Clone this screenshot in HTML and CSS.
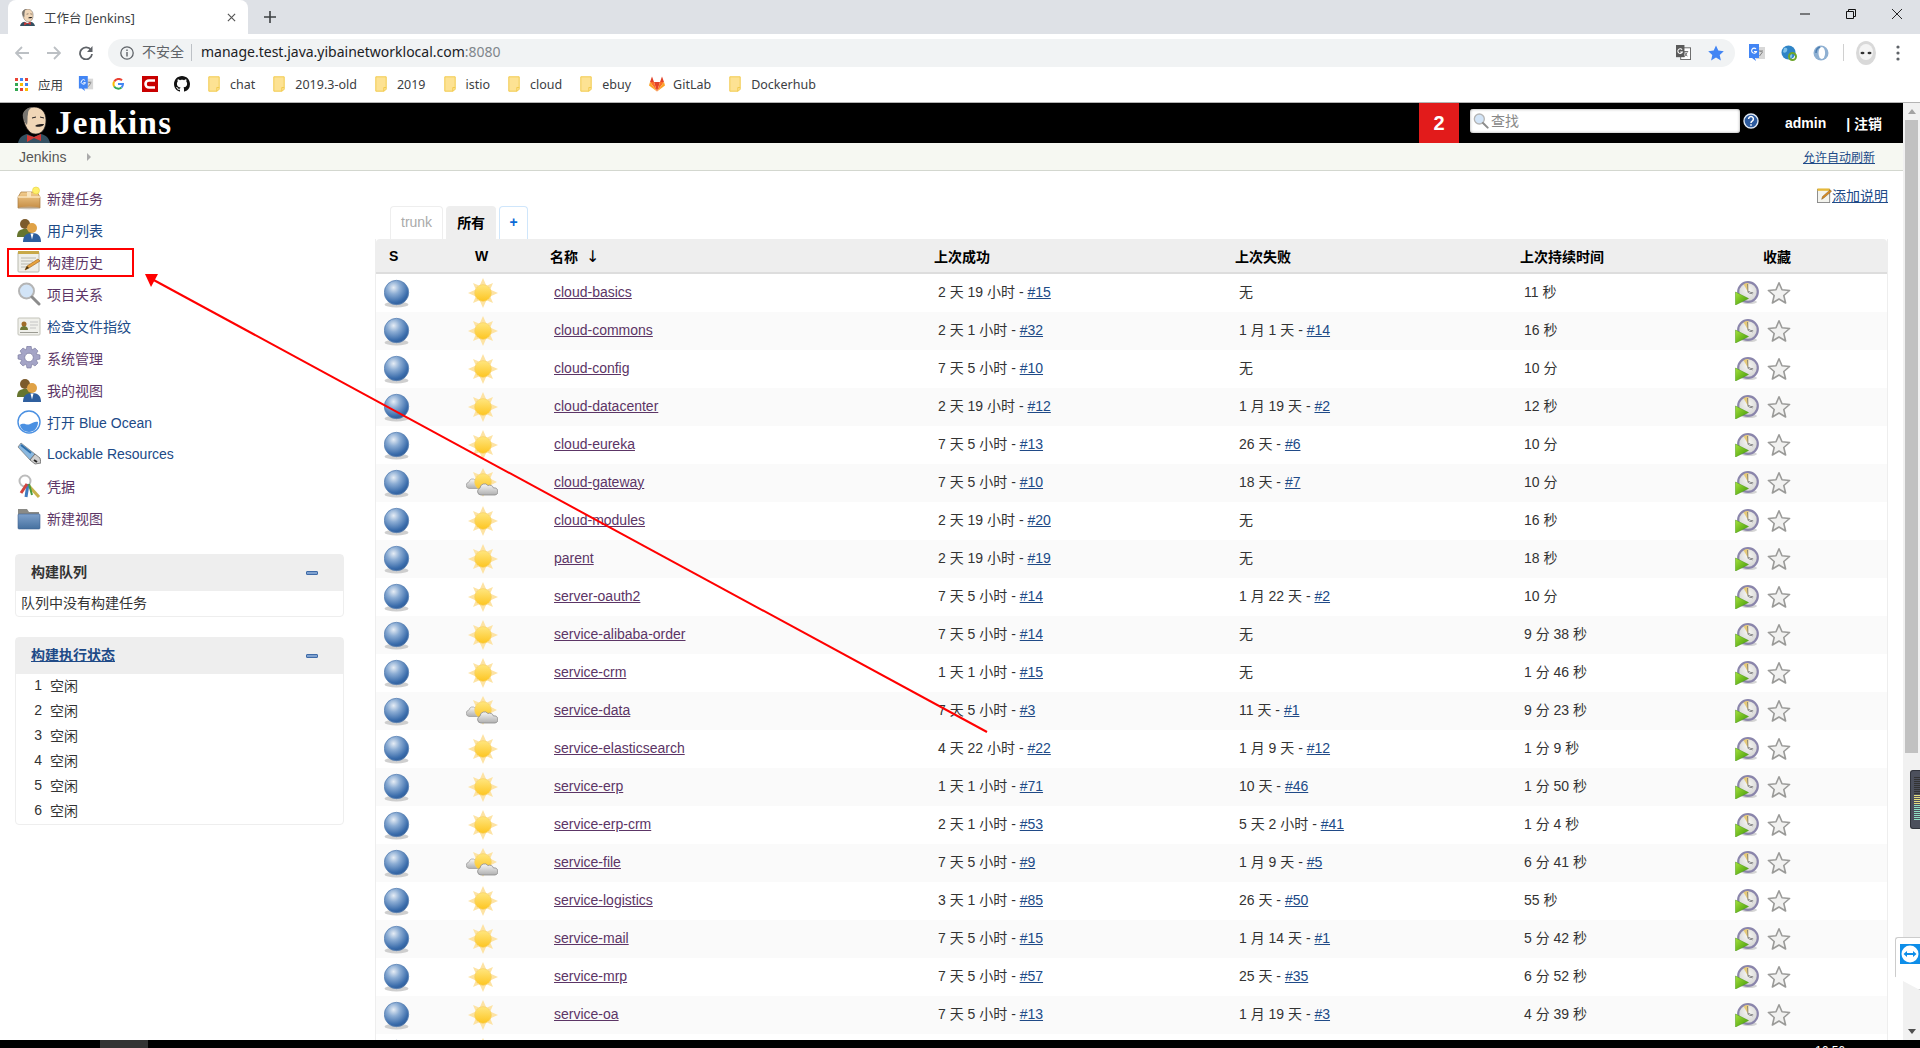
FILE: index.html
```html
<!DOCTYPE html>
<html lang="zh-CN">
<head>
    <meta charset="UTF-8">
    <title>工作台 [Jenkins]</title>
    <link rel="stylesheet" href="styles.css">
</head>
<body>
<svg class="defs" aria-hidden="true">
    <defs>
        <radialGradient id="g-ball" cx="0.38" cy="0.3" r="0.75">
            <stop offset="0" stop-color="#e6edf5"/>
            <stop offset="0.35" stop-color="#8cadd4"/>
            <stop offset="0.8" stop-color="#3a6cab"/>
            <stop offset="1" stop-color="#2d5a95"/>
        </radialGradient>
        <linearGradient id="g-sun" x1="0" y1="0" x2="0" y2="1">
            <stop offset="0" stop-color="#ffe67f"/>
            <stop offset="1" stop-color="#fdc521"/>
        </linearGradient>
        <linearGradient id="g-cloud" x1="0" y1="0" x2="0" y2="1">
            <stop offset="0" stop-color="#f7f7f7"/>
            <stop offset="1" stop-color="#b0b0b0"/>
        </linearGradient>
        <linearGradient id="g-play" x1="0" y1="0" x2="1" y2="1">
            <stop offset="0" stop-color="#a6e23c"/>
            <stop offset="1" stop-color="#3d9606"/>
        </linearGradient>
        <radialGradient id="g-clock" cx="0.5" cy="0.4" r="0.65">
            <stop offset="0" stop-color="#f7f7f5"/>
            <stop offset="1" stop-color="#cfcfcd"/>
        </radialGradient>
        <linearGradient id="g-box" x1="0" y1="0" x2="0" y2="1">
            <stop offset="0" stop-color="#f3cd8e"/>
            <stop offset="1" stop-color="#c58d45"/>
        </linearGradient>
        <linearGradient id="g-folder" x1="0" y1="0" x2="0" y2="1">
            <stop offset="0" stop-color="#7fa1cb"/>
            <stop offset="1" stop-color="#45709f"/>
        </linearGradient>

        <symbol id="i-ball" viewBox="0 0 28 30">
            <ellipse cx="12.500" cy="26.500" rx="12" ry="3" fill="#bbb" opacity=".7"/>
            <circle cx="12.500" cy="14.500" r="12.200" fill="url(#g-ball)" stroke="#5d84b5" stroke-width=".8"/>
        </symbol>
        <symbol id="i-sun" viewBox="0 0 30 30">
            <g fill="#fde3a4">
                <polygon points="15,0 11.500,8 18.500,8"/>
                <polygon points="15,30 11.500,22 18.500,22"/>
                <polygon points="0,15 8,11.500 8,18.500"/>
                <polygon points="30,15 22,11.500 22,18.500"/>
                <polygon points="5,5 11,7.500 7.500,11"/>
                <polygon points="25,5 19,7.500 22.500,11"/>
                <polygon points="5,25 11,22.500 7.500,19"/>
                <polygon points="25,25 19,22.500 22.500,19"/>
            </g>
            <circle cx="15" cy="15" r="8.300" fill="url(#g-sun)" stroke="#f6cd5b" stroke-width=".6"/>
        </symbol>
        <symbol id="i-cloudy" viewBox="0 0 32 30">
            <g fill="#fde3a4">
                <polygon points="17,0 14,6 20,6"/>
                <polygon points="7,4 13,6.500 9.500,10"/>
                <polygon points="27,4 21,6.500 24.500,10"/>
                <polygon points="31,14 25,11 25,17"/>
                <polygon points="17,29 14,23 20,23"/>
            </g>
            <path d="M3 20.500a3.300 3.300 0 0 1 0-6.500a3.500 3.500 0 0 1 6-2a3.500 3.500 0 0 1 4 4v4.500z" fill="url(#g-cloud)" stroke="#999" stroke-width=".7"/>
            <circle cx="17" cy="14" r="8.300" fill="url(#g-sun)" stroke="#f6cd5b" stroke-width=".6"/>
            <path d="M15 27a3.600 3.600 0 0 1-1-7a4.500 4.500 0 0 1 8-2.500a4 4 0 0 1 5.500 2.500a3.500 3.500 0 0 1 1.500 7z" fill="url(#g-cloud)" stroke="#8a8a8a" stroke-width=".8"/>
        </symbol>
        <symbol id="i-build" viewBox="0 0 24 24">
            <ellipse cx="14" cy="21" rx="8" ry="2" fill="#bbb" opacity=".6"/>
            <circle cx="13" cy="11" r="9.800" fill="url(#g-clock)" stroke="#8a85ab" stroke-width="2.200"/>
            <path d="M13 11L8.500 3.200A9 9 0 0 1 13.500 2z" fill="#e8cb78"/>
            <path d="M13 11l-.5-8" stroke="#777" stroke-width=".8" fill="none"/>
            <path d="M13 11l5 1.500" stroke="#222" stroke-width="1.800" fill="none"/>
            <path d="M13 11l5 1.500" stroke="#fff" stroke-width=".8" fill="none"/>
            <polygon points="0.500,11 13.500,17.500 0.500,24" fill="url(#g-play)" stroke="#4d9a14" stroke-width=".5"/>
        </symbol>
        <symbol id="i-star" viewBox="0 0 24 24">
            <polygon points="12,1.800 15,8.800 22.600,9.500 16.800,14.500 18.600,22 12,18 5.400,22 7.200,14.500 1.400,9.500 9,8.800" fill="#f1f1f0" stroke="#9b9b99" stroke-width="1.600" stroke-linejoin="round"/>
        </symbol>
        <symbol id="i-head" viewBox="0 0 32 36">
            <path d="M0 36c1-5 4-8 9-9l7 3l7-3c5 1 8 4 9 9z" fill="#335061"/>
            <path d="M5 10C4 4 10 0 16 0c7 0 12 5 12 13c0 6-2 11-6 13c-4 2-9 1-11-2C8 21 6 16 5 10z" fill="#f0d6b7" stroke="#231f20" stroke-width=".7"/>
            <path d="M5 10C4 4 10 0 16 0c-4 1-6 3-6 7c-1 3 0 7-1 11C7 16 6 14 5 10z" fill="#77746f"/>
            <path d="M14 11l4-1M22 10l4 1" stroke="#231f20" stroke-width="1" fill="none"/>
            <path d="M17 19c2-2 6-2 9-2c0 2-5 4-9 2z" fill="#231f20"/>
            <polygon points="9,28 16,30 23,27 23,34 16,31 9,35" fill="#d33833"/>
        </symbol>
        <symbol id="i-translate" viewBox="0 0 16 18">
            <rect x="7" y="3" width="9" height="12" fill="#d8d8d8"/>
            <path d="M10 7h4M12 7v1M10.500 12l3-4" stroke="#777" stroke-width=".9" fill="none"/>
            <path d="M0 0h10v14H6l1 3l-4-3H0z" fill="#4285f4"/>
            <path d="M7 5a2.500 2.500 0 1 0 .5 2.500H5" stroke="#fff" stroke-width="1.100" fill="none"/>
        </symbol>
        <symbol id="i-translate-dark" viewBox="0 0 16 16">
            <rect x="5" y="3" width="10.500" height="12.500" fill="#fff" stroke="#666"/>
            <path d="M8 7h5M10.500 7v1M9 12.500l3-4.500M9 8l3 4" stroke="#666" fill="none"/>
            <rect width="9" height="13" fill="#5a5a5a"/>
            <path d="M6.500 5a2.500 2.500 0 1 0 .3 2.500H4.500" stroke="#fff" stroke-width="1.100" fill="none"/>
        </symbol>
        <symbol id="i-folder-mark" viewBox="0 0 12 16">
            <path d="M.8.8h10.400v12.400l-2 2H.8z" fill="#fde293" stroke="#f2cb4f" stroke-width="1"/>
            <path d="M11.200 11.500H8.800v3.500" fill="none" stroke="#f2cb4f"/>
        </symbol>

        <symbol id="i-users" viewBox="0 0 24 24">
            <circle cx="8" cy="6" r="5" fill="#7c5a2c"/>
            <path d="M0 19c0-6 3-8 8-8s8 2 8 8z" fill="#66752f"/>
            <circle cx="15" cy="10" r="5" fill="#e0a246"/>
            <path d="M6 24c0-6 3-9 9-9s9 3 9 9z" fill="#2f5f9e"/>
            <path d="M13.500 15.500h3l-1.500 6z" fill="#fff"/>
        </symbol>
        <symbol id="i-package" viewBox="0 0 24 24">
            <path d="M1 11l3-5h16l3 5v11H1z" fill="url(#g-box)" stroke="#a87a3c" stroke-width=".7"/>
            <path d="M1 11h22" stroke="#fbe5bd" stroke-width="1.500"/>
            <path d="M10 6h4v5h-4z" fill="#f9e5bf"/>
            <ellipse cx="12" cy="22" rx="11" ry="1.500" fill="#bbb" opacity=".5"/>
            <circle cx="19" cy="4.500" r="3.500" fill="#fff06a" stroke="#e5d13a" stroke-width=".6"/>
        </symbol>
        <symbol id="i-notepad" viewBox="0 0 24 24">
            <rect x="1" y="2" width="21" height="20" rx="1" fill="#efefe9" stroke="#b9b9ae"/>
            <rect x="1" y="1" width="21" height="3" fill="#c8a948"/>
            <path d="M4 8h15M4 11h12M4 14h9M4 17h7" stroke="#b9b9b0"/>
            <path d="M8 20l2-4l11-7l2 2l-11 7z" fill="#e8a33d" stroke="#9b5e17" stroke-width=".6"/>
            <path d="M8 20l2-4l2 2z" fill="#4a3410"/>
        </symbol>
        <symbol id="i-search" viewBox="0 0 24 24">
            <circle cx="9.500" cy="9" r="7.500" fill="#d2e4f7" stroke="#b5b5b5" stroke-width="2"/>
            <path d="M15 15l7 7" stroke="#8c8c8c" stroke-width="3" stroke-linecap="round"/>
        </symbol>
        <symbol id="i-card" viewBox="0 0 24 24">
            <rect x="1" y="4" width="22" height="17" rx="1" fill="#f0f0eb" stroke="#c3c3ba"/>
            <circle cx="7" cy="10" r="2.500" fill="#a06c28"/>
            <path d="M3 16c0-3 2-4 4-4s4 1 4 4z" fill="#6f7833"/>
            <path d="M13 8h8M13 11h8M13 14h6" stroke="#c4c4c4"/>
            <path d="M3 18.500h18" stroke="#9b9b93"/>
        </symbol>
        <symbol id="i-gear" viewBox="0 0 24 24">
            <path d="M10 0h4l1 4l3-2l3 3l-2 3l4 1v4l-4 1l2 3l-3 3l-3-2l-1 4h-4l-1-4l-3 2l-3-3l2-3l-4-1v-4l4-1l-2-3l3-3l3 2z" fill="#a4a4c6" stroke="#75759b" stroke-width=".6"/>
            <circle cx="12" cy="11.500" r="4.300" fill="#fff" stroke="#75759b" stroke-width=".7"/>
        </symbol>
        <symbol id="i-ocean" viewBox="0 0 24 24">
            <circle cx="12" cy="12" r="11" fill="#fff" stroke="#4a90e2" stroke-width="1.400"/>
            <path d="M3 15c4-3 7 1 10-1c3-1 5-3 8-2c0 6-4 10-9 10S4 19 3 15z" fill="#4a90e2"/>
        </symbol>
        <symbol id="i-usb" viewBox="0 0 24 24">
            <path d="M1 5l3-4l14 11l-5 6z" fill="#89b8e0" stroke="#777" stroke-width=".7"/>
            <path d="M4 3l10 8" stroke="#2d6da8" stroke-width="2"/>
            <path d="M13 18l5-6l5 4l1 5l-6 1z" fill="#cfcfcf" stroke="#555" stroke-width=".7"/>
            <path d="M17 18l3 2" stroke="#222" stroke-width="2"/>
        </symbol>
        <symbol id="i-keys" viewBox="0 0 24 24">
            <circle cx="8" cy="7" r="5.500" fill="none" stroke="#bcbcbc" stroke-width="2"/>
            <path d="M12 12l10 11" stroke="#c9b14a" stroke-width="3"/>
            <path d="M11 10L9 23" stroke="#3f7bc0" stroke-width="3"/>
            <path d="M10 10L4 19" stroke="#d0443d" stroke-width="3"/>
            <path d="M12 10l3 11" stroke="#4a9a3d" stroke-width="2"/>
        </symbol>
        <symbol id="i-folder" viewBox="0 0 24 24">
            <path d="M1 3h9l2 3h10v16H1z" fill="#8a8a86"/>
            <rect x="1" y="8" width="22" height="15" rx="1" fill="url(#g-folder)" stroke="#3f6390" stroke-width=".6"/>
        </symbol>
        <symbol id="i-note" viewBox="0 0 16 16">
            <rect x=".5" y="1.500" width="13" height="14" fill="#f4f4ee" stroke="#888"/>
            <rect x=".5" y=".5" width="13" height="2.500" fill="#e7b93a"/>
            <path d="M5 12l1-3l8-7l1.500 1.500l-8 7z" fill="#d98b22" stroke="#744a10" stroke-width=".5"/>
        </symbol>
    </defs>
</svg>

<div class="window">
    <!-- browser chrome -->
    <div class="tabstrip">
        <div class="tab">
            <svg class="tab-icon"><use href="#i-head"/></svg>
            <span class="tab-title">工作台 [Jenkins]</span>
            <svg class="tab-close" viewBox="0 0 10 10"><path d="M1 1l8 8M9 1l-8 8" stroke="#555" stroke-width="1.300"/></svg>
        </div>
        <svg class="tab-new" viewBox="0 0 12 12"><path d="M6 0v12M0 6h12" stroke="#3c4043" stroke-width="1.600"/></svg>
        <div class="win-controls">
            <div class="win-btn"><svg viewBox="0 0 10 10"><path d="M0 5h10" stroke="#111"/></svg></div>
            <div class="win-btn"><svg viewBox="0 0 10 10"><path d="M.5 2.500h7v7h-7zM2.500 2.500v-2h7v7h-2" fill="none" stroke="#111"/></svg></div>
            <div class="win-btn"><svg viewBox="0 0 10 10"><path d="M0 0l10 10M10 0L0 10" stroke="#111" stroke-width=".9"/></svg></div>
        </div>
    </div>

    <div class="toolbar">
        <svg class="nav-btn" viewBox="0 0 14 14"><path d="M14 7H2M7 1L1 7l6 6" fill="none" stroke="#bcc0c4" stroke-width="1.800"/></svg>
        <svg class="nav-btn" viewBox="0 0 14 14"><path d="M0 7h12M7 1l6 6l-6 6" fill="none" stroke="#bcc0c4" stroke-width="1.800"/></svg>
        <svg class="nav-btn" viewBox="0 0 14 14"><path d="M12 4A6 6 0 1 0 13 8" fill="none" stroke="#5f6368" stroke-width="1.800"/><polygon points="13.500,0 13.500,6 8,6" fill="#5f6368"/></svg>
        <div class="omnibox">
            <svg class="omni-info" viewBox="0 0 14 14"><circle cx="7" cy="7" r="6.200" fill="none" stroke="#5f6368" stroke-width="1.300"/><path d="M7 6v4.500M7 3.500v1.400" stroke="#5f6368" stroke-width="1.400"/></svg>
            <span class="omni-warn">不安全</span>
            <span class="omni-sep"></span>
            <span class="omni-url">manage.test.java.yibainetworklocal.com<span class="omni-port">:8080</span></span>
            <svg class="omni-translate"><use href="#i-translate-dark"/></svg>
            <svg class="omni-star" viewBox="0 0 16 16"><polygon points="8,.5 10.300,5.600 15.800,6.200 11.700,9.900 12.900,15.400 8,12.600 3.100,15.400 4.300,9.900 .2,6.200 5.700,5.600" fill="#4285f4"/></svg>
        </div>
        <svg class="ext-icon ext-first"><use href="#i-translate"/></svg>
        <svg class="ext-icon" viewBox="0 0 16 16"><circle cx="7.500" cy="7.500" r="7" fill="#2f84c6"/><path d="M3 3c3-1 4 1 3 3s-3 2-4 1zM8 9c3-1 4 1 3 3s-3 2-4 1z" fill="#7fc1ea"/><circle cx="11.500" cy="11.500" r="3.500" fill="none" stroke="#6da52b" stroke-width="2"/></svg>
        <svg class="ext-icon" viewBox="0 0 16 16"><circle cx="8" cy="8" r="7.500" fill="#8fb0d2"/><ellipse cx="8.800" cy="8" rx="3.300" ry="6" fill="#fff"/><path d="M3 8a6 6 0 0 1 4-6" stroke="#4d7fb2" stroke-width="1.500" fill="none"/></svg>
        <span class="ext-sep"></span>
        <svg class="avatar" viewBox="0 0 20 24"><ellipse cx="10" cy="12" rx="10" ry="12" fill="#d9d9d9"/><ellipse cx="10" cy="11" rx="7" ry="8" fill="#f4f4f4"/><ellipse cx="6.500" cy="12" rx="2" ry="1.200" fill="#333"/><ellipse cx="13.500" cy="12" rx="2" ry="1.200" fill="#333"/></svg>
        <svg class="menu-dots" viewBox="0 0 4 16"><circle cx="2" cy="2" r="1.600" fill="#5f6368"/><circle cx="2" cy="8" r="1.600" fill="#5f6368"/><circle cx="2" cy="14" r="1.600" fill="#5f6368"/></svg>
    </div>

    <div class="bookmarks">
        <div class="bm bm-apps">
            <svg class="bm-grid" viewBox="0 0 13 13">
                <rect width="3" height="3" fill="#ea4335"/><rect x="5" width="3" height="3" fill="#4285f4"/><rect x="10" width="3" height="3" fill="#ea4335"/>
                <rect y="5" width="3" height="3" fill="#34a853"/><rect x="5" y="5" width="3" height="3" fill="#fbbc05"/><rect x="10" y="5" width="3" height="3" fill="#4285f4"/>
                <rect y="10" width="3" height="3" fill="#34a853"/><rect x="5" y="10" width="3" height="3" fill="#ea4335"/><rect x="10" y="10" width="3" height="3" fill="#fbbc05"/>
            </svg>
            <span>应用</span>
        </div>
        <div class="bm"><svg class="bm-icon"><use href="#i-translate"/></svg></div>
        <div class="bm">
            <svg class="bm-google" viewBox="0 0 12 12">
                <path d="M10 2.300A5 5 0 0 0 2.200 3.500" fill="none" stroke="#ea4335" stroke-width="2"/>
                <path d="M2.200 3.500a5 5 0 0 0 0 5" fill="none" stroke="#fbbc05" stroke-width="2"/>
                <path d="M2.200 8.500A5 5 0 0 0 9.500 9.500" fill="none" stroke="#34a853" stroke-width="2"/>
                <path d="M9.500 9.500A5 5 0 0 0 11 6H6" fill="none" stroke="#4285f4" stroke-width="2"/>
            </svg>
        </div>
        <div class="bm bm-tight">
            <svg class="bm-icon" viewBox="0 0 16 16"><rect width="16" height="16" fill="#c80000"/><path d="M13 4.500H7a3.500 3.500 0 0 0 0 7h6" fill="none" stroke="#fff" stroke-width="2.600"/></svg>
        </div>
        <div class="bm">
            <svg class="bm-icon" viewBox="0 0 16 16"><path d="M8 0C3.580 0 0 3.580 0 8c0 3.540 2.290 6.530 5.470 7.590.4.070.55-.17.55-.38 0-.19-.01-.82-.01-1.490-2.010.37-2.530-.49-2.690-.94-.09-.23-.48-.94-.82-1.130-.28-.15-.68-.52-.01-.53.63-.01 1.080.58 1.230.82.72 1.210 1.870.87 2.330.66.07-.52.28-.87.51-1.070-1.780-.2-3.640-.89-3.640-3.950 0-.87.31-1.590.82-2.150-.08-.2-.36-1.020.08-2.120 0 0 .67-.21 2.200.82.64-.18 1.320-.27 2-.27.68 0 1.360.09 2 .27 1.530-1.040 2.200-.82 2.200-.82.44 1.100.16 1.920.08 2.120.51.56.82 1.270.82 2.150 0 3.070-1.870 3.750-3.650 3.950.29.25.54.73.54 1.480 0 1.070-.01 1.930-.01 2.200 0 .21.15.46.55.38A8.013 8.013 0 0016 8c0-4.420-3.580-8-8-8z" fill="#111"/></svg>
        </div>
        <div class="bm"><svg class="bm-folder"><use href="#i-folder-mark"/></svg><span>chat</span></div>
        <div class="bm"><svg class="bm-folder"><use href="#i-folder-mark"/></svg><span>2019.3-old</span></div>
        <div class="bm"><svg class="bm-folder"><use href="#i-folder-mark"/></svg><span>2019</span></div>
        <div class="bm"><svg class="bm-folder"><use href="#i-folder-mark"/></svg><span>istio</span></div>
        <div class="bm"><svg class="bm-folder"><use href="#i-folder-mark"/></svg><span>cloud</span></div>
        <div class="bm"><svg class="bm-folder"><use href="#i-folder-mark"/></svg><span>ebuy</span></div>
        <div class="bm bm-lab">
            <svg class="bm-icon" viewBox="0 0 16 16">
                <polygon points="8,15.500 11,6 5,6" fill="#e24329"/>
                <polygon points="8,15.500 5,6 1,6" fill="#fc6d26"/>
                <polygon points="8,15.500 11,6 15,6" fill="#fc6d26"/>
                <polygon points="1,6 0,9.500 8,15.500" fill="#fca326"/>
                <polygon points="15,6 16,9.500 8,15.500" fill="#fca326"/>
                <polygon points="1,6 5,6 3,.5" fill="#e24329"/>
                <polygon points="15,6 11,6 13,.5" fill="#e24329"/>
            </svg>
            <span>GitLab</span>
        </div>
        <div class="bm"><svg class="bm-folder"><use href="#i-folder-mark"/></svg><span>Dockerhub</span></div>
    </div>

    <div class="viewport">
        <div class="page">
            <div class="header">
                <div class="logo">
                    <svg class="logo-head"><use href="#i-head"/></svg>
                    <span class="logo-text">Jenkins</span>
                </div>
                <div class="build-count">2</div>
                <div class="search">
                    <svg class="search-icon"><use href="#i-search"/></svg>
                    <span>查找</span>
                </div>
                <svg class="help" viewBox="0 0 16 16"><circle cx="8" cy="8" r="7" fill="#2c5a9e" stroke="#dfe8f3" stroke-width="1.400"/><path d="M5.600 6a2.400 2.400 0 1 1 3.600 2.100c-.8.500-1.200.9-1.200 1.900M8 11.200v1.600" fill="none" stroke="#fff" stroke-width="1.500"/></svg>
                <span class="user">admin</span>
                <span class="logout">| 注销</span>
            </div>
            <div class="breadcrumb">
                <span class="crumb">Jenkins</span>
                <span class="crumb-arrow"></span>
                <a class="auto-refresh" href="#">允许自动刷新</a>
            </div>
            <div class="main">
                <div class="side">
                    <div class="tasks">
                        <a class="task visited" href="#"><svg><use href="#i-package"/></svg>新建任务</a>
                        <a class="task" href="#"><svg><use href="#i-users"/></svg>用户列表</a>
                        <a class="task visited" href="#"><svg><use href="#i-notepad"/></svg>构建历史</a>
                        <a class="task visited" href="#"><svg><use href="#i-search"/></svg>项目关系</a>
                        <a class="task" href="#"><svg><use href="#i-card"/></svg>检查文件指纹</a>
                        <a class="task visited" href="#"><svg><use href="#i-gear"/></svg>系统管理</a>
                        <a class="task visited" href="#"><svg><use href="#i-users"/></svg>我的视图</a>
                        <a class="task" href="#"><svg><use href="#i-ocean"/></svg>打开 Blue Ocean</a>
                        <a class="task" href="#"><svg><use href="#i-usb"/></svg>Lockable Resources</a>
                        <a class="task visited" href="#"><svg><use href="#i-keys"/></svg>凭据</a>
                        <a class="task visited" href="#"><svg><use href="#i-folder"/></svg>新建视图</a>
                    </div>
                    <div class="pane">
                        <div class="pane-head"><span>构建队列</span><span class="collapse"></span></div>
                        <div class="pane-text">队列中没有构建任务</div>
                    </div>
                    <div class="pane">
                        <div class="pane-head"><a href="#">构建执行状态</a><span class="collapse"></span></div>
                        <div class="exec"><span>1</span>空闲</div>
                        <div class="exec"><span>2</span>空闲</div>
                        <div class="exec"><span>3</span>空闲</div>
                        <div class="exec"><span>4</span>空闲</div>
                        <div class="exec"><span>5</span>空闲</div>
                        <div class="exec"><span>6</span>空闲</div>
                    </div>
                </div>
                <div class="content">
                    <div class="add-desc"><svg><use href="#i-note"/></svg><a href="#">添加说明</a></div>
                    <div class="tabs">
                        <div class="view-tab">trunk</div>
                        <div class="view-tab active">所有</div>
                        <div class="view-tab add">+</div>
                    </div>
                    <table class="jobs">
                        <colgroup>
                            <col class="c-s"><col class="c-w"><col class="c-name"><col class="c-ok"><col class="c-fail"><col class="c-dur"><col class="c-fav">
                        </colgroup>
                        <thead>
                            <tr>
                                <th class="th-s">S</th>
                                <th class="th-w">W</th>
                                <th>名称 <span class="sort">↓</span></th>
                                <th>上次成功</th>
                                <th>上次失败</th>
                                <th>上次持续时间</th>
                                <th class="th-fav">收藏</th>
                            </tr>
                        </thead>
                        <tbody>
                            <tr><td><svg class="ball"><use href="#i-ball"/></svg></td><td><svg class="sun"><use href="#i-sun"/></svg></td><td><a class="job" href="#">cloud-basics</a></td><td>2 天 19 小时 - <a href="#">#15</a></td><td>无</td><td>11 秒</td><td><div class="acts"><svg><use href="#i-build"/></svg><svg><use href="#i-star"/></svg></div></td></tr>
                            <tr><td><svg class="ball"><use href="#i-ball"/></svg></td><td><svg class="sun"><use href="#i-sun"/></svg></td><td><a class="job" href="#">cloud-commons</a></td><td>2 天 1 小时 - <a href="#">#32</a></td><td>1 月 1 天 - <a href="#">#14</a></td><td>16 秒</td><td><div class="acts"><svg><use href="#i-build"/></svg><svg><use href="#i-star"/></svg></div></td></tr>
                            <tr><td><svg class="ball"><use href="#i-ball"/></svg></td><td><svg class="sun"><use href="#i-sun"/></svg></td><td><a class="job" href="#">cloud-config</a></td><td>7 天 5 小时 - <a href="#">#10</a></td><td>无</td><td>10 分</td><td><div class="acts"><svg><use href="#i-build"/></svg><svg><use href="#i-star"/></svg></div></td></tr>
                            <tr><td><svg class="ball"><use href="#i-ball"/></svg></td><td><svg class="sun"><use href="#i-sun"/></svg></td><td><a class="job" href="#">cloud-datacenter</a></td><td>2 天 19 小时 - <a href="#">#12</a></td><td>1 月 19 天 - <a href="#">#2</a></td><td>12 秒</td><td><div class="acts"><svg><use href="#i-build"/></svg><svg><use href="#i-star"/></svg></div></td></tr>
                            <tr><td><svg class="ball"><use href="#i-ball"/></svg></td><td><svg class="sun"><use href="#i-sun"/></svg></td><td><a class="job" href="#">cloud-eureka</a></td><td>7 天 5 小时 - <a href="#">#13</a></td><td>26 天 - <a href="#">#6</a></td><td>10 分</td><td><div class="acts"><svg><use href="#i-build"/></svg><svg><use href="#i-star"/></svg></div></td></tr>
                            <tr><td><svg class="ball"><use href="#i-ball"/></svg></td><td><svg class="cloudy"><use href="#i-cloudy"/></svg></td><td><a class="job" href="#">cloud-gateway</a></td><td>7 天 5 小时 - <a href="#">#10</a></td><td>18 天 - <a href="#">#7</a></td><td>10 分</td><td><div class="acts"><svg><use href="#i-build"/></svg><svg><use href="#i-star"/></svg></div></td></tr>
                            <tr><td><svg class="ball"><use href="#i-ball"/></svg></td><td><svg class="sun"><use href="#i-sun"/></svg></td><td><a class="job" href="#">cloud-modules</a></td><td>2 天 19 小时 - <a href="#">#20</a></td><td>无</td><td>16 秒</td><td><div class="acts"><svg><use href="#i-build"/></svg><svg><use href="#i-star"/></svg></div></td></tr>
                            <tr><td><svg class="ball"><use href="#i-ball"/></svg></td><td><svg class="sun"><use href="#i-sun"/></svg></td><td><a class="job" href="#">parent</a></td><td>2 天 19 小时 - <a href="#">#19</a></td><td>无</td><td>18 秒</td><td><div class="acts"><svg><use href="#i-build"/></svg><svg><use href="#i-star"/></svg></div></td></tr>
                            <tr><td><svg class="ball"><use href="#i-ball"/></svg></td><td><svg class="sun"><use href="#i-sun"/></svg></td><td><a class="job" href="#">server-oauth2</a></td><td>7 天 5 小时 - <a href="#">#14</a></td><td>1 月 22 天 - <a href="#">#2</a></td><td>10 分</td><td><div class="acts"><svg><use href="#i-build"/></svg><svg><use href="#i-star"/></svg></div></td></tr>
                            <tr><td><svg class="ball"><use href="#i-ball"/></svg></td><td><svg class="sun"><use href="#i-sun"/></svg></td><td><a class="job" href="#">service-alibaba-order</a></td><td>7 天 5 小时 - <a href="#">#14</a></td><td>无</td><td>9 分 38 秒</td><td><div class="acts"><svg><use href="#i-build"/></svg><svg><use href="#i-star"/></svg></div></td></tr>
                            <tr><td><svg class="ball"><use href="#i-ball"/></svg></td><td><svg class="sun"><use href="#i-sun"/></svg></td><td><a class="job" href="#">service-crm</a></td><td>1 天 1 小时 - <a href="#">#15</a></td><td>无</td><td>1 分 46 秒</td><td><div class="acts"><svg><use href="#i-build"/></svg><svg><use href="#i-star"/></svg></div></td></tr>
                            <tr><td><svg class="ball"><use href="#i-ball"/></svg></td><td><svg class="cloudy"><use href="#i-cloudy"/></svg></td><td><a class="job" href="#">service-data</a></td><td>7 天 5 小时 - <a href="#">#3</a></td><td>11 天 - <a href="#">#1</a></td><td>9 分 23 秒</td><td><div class="acts"><svg><use href="#i-build"/></svg><svg><use href="#i-star"/></svg></div></td></tr>
                            <tr><td><svg class="ball"><use href="#i-ball"/></svg></td><td><svg class="sun"><use href="#i-sun"/></svg></td><td><a class="job" href="#">service-elasticsearch</a></td><td>4 天 22 小时 - <a href="#">#22</a></td><td>1 月 9 天 - <a href="#">#12</a></td><td>1 分 9 秒</td><td><div class="acts"><svg><use href="#i-build"/></svg><svg><use href="#i-star"/></svg></div></td></tr>
                            <tr><td><svg class="ball"><use href="#i-ball"/></svg></td><td><svg class="sun"><use href="#i-sun"/></svg></td><td><a class="job" href="#">service-erp</a></td><td>1 天 1 小时 - <a href="#">#71</a></td><td>10 天 - <a href="#">#46</a></td><td>1 分 50 秒</td><td><div class="acts"><svg><use href="#i-build"/></svg><svg><use href="#i-star"/></svg></div></td></tr>
                            <tr><td><svg class="ball"><use href="#i-ball"/></svg></td><td><svg class="sun"><use href="#i-sun"/></svg></td><td><a class="job" href="#">service-erp-crm</a></td><td>2 天 1 小时 - <a href="#">#53</a></td><td>5 天 2 小时 - <a href="#">#41</a></td><td>1 分 4 秒</td><td><div class="acts"><svg><use href="#i-build"/></svg><svg><use href="#i-star"/></svg></div></td></tr>
                            <tr><td><svg class="ball"><use href="#i-ball"/></svg></td><td><svg class="cloudy"><use href="#i-cloudy"/></svg></td><td><a class="job" href="#">service-file</a></td><td>7 天 5 小时 - <a href="#">#9</a></td><td>1 月 9 天 - <a href="#">#5</a></td><td>6 分 41 秒</td><td><div class="acts"><svg><use href="#i-build"/></svg><svg><use href="#i-star"/></svg></div></td></tr>
                            <tr><td><svg class="ball"><use href="#i-ball"/></svg></td><td><svg class="sun"><use href="#i-sun"/></svg></td><td><a class="job" href="#">service-logistics</a></td><td>3 天 1 小时 - <a href="#">#85</a></td><td>26 天 - <a href="#">#50</a></td><td>55 秒</td><td><div class="acts"><svg><use href="#i-build"/></svg><svg><use href="#i-star"/></svg></div></td></tr>
                            <tr><td><svg class="ball"><use href="#i-ball"/></svg></td><td><svg class="sun"><use href="#i-sun"/></svg></td><td><a class="job" href="#">service-mail</a></td><td>7 天 5 小时 - <a href="#">#15</a></td><td>1 月 14 天 - <a href="#">#1</a></td><td>5 分 42 秒</td><td><div class="acts"><svg><use href="#i-build"/></svg><svg><use href="#i-star"/></svg></div></td></tr>
                            <tr><td><svg class="ball"><use href="#i-ball"/></svg></td><td><svg class="sun"><use href="#i-sun"/></svg></td><td><a class="job" href="#">service-mrp</a></td><td>7 天 5 小时 - <a href="#">#57</a></td><td>25 天 - <a href="#">#35</a></td><td>6 分 52 秒</td><td><div class="acts"><svg><use href="#i-build"/></svg><svg><use href="#i-star"/></svg></div></td></tr>
                            <tr><td><svg class="ball"><use href="#i-ball"/></svg></td><td><svg class="sun"><use href="#i-sun"/></svg></td><td><a class="job" href="#">service-oa</a></td><td>7 天 5 小时 - <a href="#">#13</a></td><td>1 月 19 天 - <a href="#">#3</a></td><td>4 分 39 秒</td><td><div class="acts"><svg><use href="#i-build"/></svg><svg><use href="#i-star"/></svg></div></td></tr>
                            <tr><td><svg class="ball"><use href="#i-ball"/></svg></td><td><svg class="sun"><use href="#i-sun"/></svg></td><td></td><td></td><td></td><td></td><td></td></tr>
                        </tbody>
                    </table>
                </div>
            </div>
        </div>
        <div class="scrollbar">
            <div class="sb-arrow"><span class="sb-up"></span></div>
            <div class="sb-thumb"></div>
            <div class="sb-arrow sb-end"><span class="sb-down"></span></div>
        </div>
    </div>

    <div class="taskbar">
        <span class="task-active"></span>
        <span class="clock">16:56</span>
    </div>
</div>

<!-- things drawn on top of the page -->
<div class="mark-box"></div>
<svg class="mark-arrow" viewBox="0 0 1920 1048">
    <path d="M987 732L150 278" stroke="#f00" stroke-width="2" fill="none"/>
    <polygon points="145,274 158,274 151,287" fill="#f00"/>
</svg>
<div class="meter"><span class="meter-bars"></span></div>
<div class="tv-panel">
    <svg class="tv-logo" viewBox="0 0 20 20">
        <rect width="20" height="20" fill="#0e8ee9"/>
        <circle cx="10" cy="10" r="8.500" fill="#fff"/>
        <path d="M3.500 10l3.500-3v2h6V7l3.500 3l-3.500 3v-2H7v2z" fill="#0e8ee9"/>
    </svg>
</div>
</body>
</html>
```

FILE: styles.css
```css
* {
    box-sizing: border-box;
}
html, body {
    margin: 0;
    padding: 0;
    height: 100%;
    overflow: hidden;
}
body {
    font-family: "Liberation Sans", "Noto Sans CJK SC", sans-serif;
    font-size: 14px;
    color: #333;
    background: #fff;
}
a {
    color: #204a87;
}
.defs {
    position: absolute;
    width: 0;
    height: 0;
}
.window {
    display: flex;
    flex-direction: column;
    height: 100vh;
}

/* browser chrome */
.tabstrip {
    display: flex;
    align-items: flex-end;
    height: 34px;
    flex: none;
    padding-left: 8px;
    background: #dee1e6;
}
.tab {
    display: flex;
    align-items: center;
    width: 240px;
    height: 34px;
    padding-left: 12px;
    background: #fff;
    border-radius: 8px 8px 0 0;
}
.tab-icon {
    width: 15px;
    height: 17px;
}
.tab-title {
    margin-left: 9px;
    font-family: "Noto Sans", "Noto Sans CJK SC", sans-serif;
    font-size: 12.5px;
    color: #3c4043;
}
.tab-close {
    width: 9px;
    height: 9px;
    margin-left: auto;
    margin-right: 12px;
}
.tab-new {
    width: 12px;
    height: 12px;
    margin: 0 0 11px 16px;
}
.win-controls {
    display: flex;
    margin-left: auto;
    align-self: flex-start;
}
.win-btn {
    display: flex;
    align-items: center;
    justify-content: center;
    width: 46px;
    height: 28px;
}
.win-btn svg {
    width: 10px;
    height: 10px;
}
.toolbar {
    display: flex;
    align-items: center;
    height: 33px;
    flex: none;
    padding: 4px 0 0 15px;
    background: #fff;
}
.nav-btn {
    width: 14px;
    height: 14px;
    margin-right: 18px;
}
.nav-btn:nth-child(3) {
    margin-right: 15px;
}
.omnibox {
    display: flex;
    align-items: center;
    width: 1627px;
    height: 28px;
    padding: 0 11px 0 12px;
    background: #f1f3f4;
    border-radius: 14px;
    font-family: "Noto Sans", "Noto Sans CJK SC", sans-serif;
}
.omni-info {
    width: 14px;
    height: 14px;
}
.omni-warn {
    margin: 0 0 3px 8px;
    font-size: 14px;
    color: #5f6368;
}
.omni-sep {
    width: 1px;
    height: 17px;
    margin-left: 7px;
    background: #bdc1c6;
}
.omni-url {
    margin: 0 0 2px 9px;
    font-size: 14px;
    color: #202124;
}
.omni-port {
    color: #80868b;
}
.omni-translate {
    width: 15px;
    height: 15px;
    margin-left: auto;
}
.omni-star {
    width: 16px;
    height: 16px;
    margin-left: 17px;
}
.ext-icon {
    width: 16px;
    height: 16px;
    margin-left: 16px;
}
.ext-first {
    margin-left: 14px;
    height: 18px;
}
.ext-sep {
    width: 1px;
    height: 17px;
    margin-left: 14px;
    background: #d0d0d0;
}
.avatar {
    width: 20px;
    height: 24px;
    margin-left: 12px;
}
.menu-dots {
    width: 4px;
    height: 16px;
    margin-left: 20px;
}
.bookmarks {
    display: flex;
    align-items: center;
    height: 36px;
    flex: none;
    padding: 0 0 1px 15px;
    background: #fff;
    border-bottom: 1px solid #b4b4b4;
    font-family: "Noto Sans", "Noto Sans CJK SC", sans-serif;
    font-size: 12.5px;
    color: #3c4043;
}
.bm {
    display: flex;
    align-items: center;
    gap: 10px;
    margin-right: 18px;
}
.bm-apps {
    margin-right: 15px;
}
.bm-tight {
    margin-right: 16px;
}
.bm-lab {
    gap: 8px;
}
.bm-grid {
    width: 13px;
    height: 13px;
}
.bm-icon {
    width: 16px;
    height: 16px;
}
.bm-google {
    width: 12px;
    height: 12px;
}
.bm-folder {
    width: 12px;
    height: 16px;
}

/* page */
.viewport {
    display: flex;
    flex: 1;
    min-height: 0;
}
.page {
    flex: 1;
    min-width: 0;
    overflow: hidden;
}
.header {
    display: flex;
    align-items: center;
    height: 40px;
    padding-right: 21px;
    background: #000;
    color: #fff;
}
.logo {
    display: flex;
    align-items: flex-end;
    align-self: stretch;
    padding-left: 18px;
}
.logo-head {
    width: 32px;
    height: 36px;
}
.logo-text {
    align-self: center;
    margin-left: 5px;
    font-family: "Liberation Serif", serif;
    font-weight: bold;
    font-size: 33px;
    letter-spacing: 1.3px;
}
.build-count {
    display: flex;
    align-items: center;
    justify-content: center;
    align-self: stretch;
    width: 40px;
    margin-left: auto;
    background: #e21b1b;
    font-size: 20px;
    font-weight: bold;
}
.search {
    display: flex;
    align-items: center;
    width: 270px;
    height: 24px;
    margin: 0 0 4px 11px;
    padding-left: 3px;
    background: #fff;
    border-radius: 3px;
    box-shadow: inset 0 0 3px #999;
    color: #888;
}
.search span {
    padding-bottom: 2px;
}
.search-icon {
    width: 16px;
    height: 16px;
    margin-right: 2px;
}
.help {
    width: 16px;
    height: 16px;
    margin: 0 0 4px 3px;
}
.user {
    margin-left: 26px;
    font-weight: bold;
    font-size: 14px;
}
.logout {
    margin-left: 20px;
    font-weight: bold;
    font-size: 14px;
}
.breadcrumb {
    display: flex;
    align-items: center;
    height: 28px;
    padding: 0 28px 0 19px;
    background: #f6f8f2;
    border-bottom: 1px solid #d3d7cf;
}
.crumb {
    color: #555;
}
.crumb-arrow {
    width: 0;
    height: 0;
    margin-left: 21px;
    border-left: 4px solid #aaa;
    border-top: 4px solid transparent;
    border-bottom: 4px solid transparent;
}
.auto-refresh {
    margin-left: auto;
    font-size: 12px;
}
.main {
    display: flex;
}
.side {
    flex: none;
    width: 360px;
    padding-top: 12px;
}
.tasks {
    margin-bottom: 19px;
}
.task {
    display: flex;
    align-items: center;
    gap: 6px;
    height: 32px;
    padding: 0 0 2px 17px;
    text-decoration: none;
}
.task.visited {
    color: #5c3566;
}
.task svg {
    width: 24px;
    height: 24px;
    flex: none;
}
.pane {
    margin: 0 16px 20px 15px;
    border: 1px solid #eee;
    border-radius: 4px;
}
.pane-head {
    display: flex;
    align-items: center;
    justify-content: space-between;
    height: 36px;
    padding: 0 15px 4px;
    background: #eee;
    font-weight: bold;
}
.pane-text {
    height: 25px;
    line-height: 24px;
    padding-left: 5px;
}
.collapse {
    width: 12px;
    height: 4px;
    margin: 4px 10px 0 0;
    background: #7fa1cf;
    border: 1px solid #3f6ba8;
    border-radius: 1px;
}
.exec {
    display: flex;
    height: 25px;
    padding-bottom: 3px;
    align-items: center;
}
.exec span {
    flex: none;
    width: 34px;
    padding-right: 8px;
    text-align: right;
}
.content {
    flex: 1;
    min-width: 0;
    padding: 0 15px;
}
.add-desc {
    display: flex;
    align-items: center;
    justify-content: flex-end;
    height: 35px;
    padding-top: 13px;
}
.add-desc svg {
    width: 15px;
    height: 15px;
}
.tabs {
    display: flex;
    gap: 3px;
    padding-left: 15px;
}
.view-tab {
    display: flex;
    align-items: center;
    justify-content: center;
    height: 33px;
    padding: 0 10px 2px;
    color: #aaa;
    border: 1px solid #eee;
    border-bottom: 0;
    border-radius: 4px 4px 0 0;
}
.view-tab.active {
    width: 50px;
    background: #eee;
    color: #000;
    font-weight: bold;
}
.view-tab.add {
    width: 29px;
    color: #0b6ad6;
    font-weight: bold;
    border-color: #cfe6fb;
}
.jobs {
    width: 1513px;
    table-layout: fixed;
    border-collapse: separate;
    border-spacing: 0;
    border-left: 1px solid #eee;
    border-right: 1px solid #eee;
}
.c-s { width: 84px; }
.c-w { width: 86px; }
.c-name { width: 384px; }
.c-ok { width: 301px; }
.c-fail { width: 285px; }
.c-dur { width: 209px; }
.c-fav { width: 162px; }
.jobs th {
    height: 35px;
    padding: 0 0 0 4px;
    background: #eee;
    border-bottom: 2px solid #ddd;
    text-align: left;
    color: #000;
    font-weight: bold;
}
.jobs th:last-child {
    border-top-right-radius: 4px;
}
.jobs th:first-child {
    border-top-left-radius: 4px;
}
.jobs .th-s {
    padding-left: 13px;
}
.jobs .th-w {
    padding-left: 15px;
}
.jobs .th-fav {
    padding-left: 38px;
}
.sort {
    margin-left: 4px;
    font-family: "DejaVu Sans", sans-serif;
    font-size: 16px;
    font-weight: normal;
}
.jobs td {
    height: 38px;
    padding: 0 0 0 8px;
}
.jobs td:nth-child(3) {
    padding-bottom: 3px;
}
.jobs td:nth-child(n+4) {
    padding-bottom: 5px;
}
.jobs td:last-child {
    padding-bottom: 0;
}
.jobs tbody tr:nth-child(even) {
    background: #fafafa;
}
.job {
    color: #5c3566;
}
.ball {
    display: block;
    width: 28px;
    height: 30px;
}
.sun {
    display: block;
    width: 30px;
    height: 30px;
}
.cloudy {
    display: block;
    width: 32px;
    height: 30px;
    margin-left: -2px;
}
.acts {
    display: flex;
    gap: 8px;
    padding-left: 2px;
}
.acts svg {
    width: 24px;
    height: 24px;
}
.scrollbar {
    display: flex;
    flex-direction: column;
    flex: none;
    width: 17px;
    background: #f1f1f1;
}
.sb-arrow {
    display: flex;
    align-items: center;
    justify-content: center;
    height: 17px;
}
.sb-up {
    border: 4px solid transparent;
    border-top: 0;
    border-bottom: 5px solid #a3a3a3;
}
.sb-down {
    border: 4px solid transparent;
    border-bottom: 0;
    border-top: 5px solid #505050;
}
.sb-thumb {
    height: 633px;
    margin: 0 2px;
    background: #c1c1c1;
}
.sb-end {
    margin-top: auto;
}
.taskbar {
    display: flex;
    height: 8px;
    flex: none;
    padding-left: 100px;
    overflow: hidden;
    background: #000;
    color: #fff;
    font-size: 12px;
}
.task-active {
    width: 48px;
    background: #333;
}
.clock {
    margin-left: 1667px;
    padding-top: 4px;
    line-height: 14px;
}

/* overlays */
.mark-box {
    position: absolute;
    left: 7px;
    top: 248px;
    width: 127px;
    height: 29px;
    border: 2px solid #f00;
}
.mark-arrow {
    position: absolute;
    left: 0;
    top: 0;
    width: 1920px;
    height: 1048px;
    pointer-events: none;
}
.meter {
    position: absolute;
    left: 1910px;
    top: 770px;
    width: 10px;
    height: 59px;
    padding: 6px 0 8px 3px;
    background: #4c505c;
    border: 1px solid #30333b;
    border-right: 0;
    border-radius: 3px 0 0 3px;
}
.meter-bars {
    display: block;
    width: 6px;
    height: 100%;
    background: repeating-linear-gradient(#0000 0, #0000 1px, #4c505c 1px, #4c505c 2px), linear-gradient(#333 0, #333 40%, #e4dd7e 40%, #e4dd7e 65%, #8fe0c2 65%);
}
.tv-panel {
    position: absolute;
    left: 1895px;
    top: 937px;
    width: 25px;
    height: 53px;
    padding: 6px 0 0 4px;
    background: #fff;
    border: 1px solid #ccc;
    border-right: 0;
    border-radius: 3px 0 0 0;
    clip-path: polygon(0 0, 100% 0, 100% 100%, 0 75%);
}
.tv-logo {
    display: block;
    width: 20px;
    height: 20px;
}
```
